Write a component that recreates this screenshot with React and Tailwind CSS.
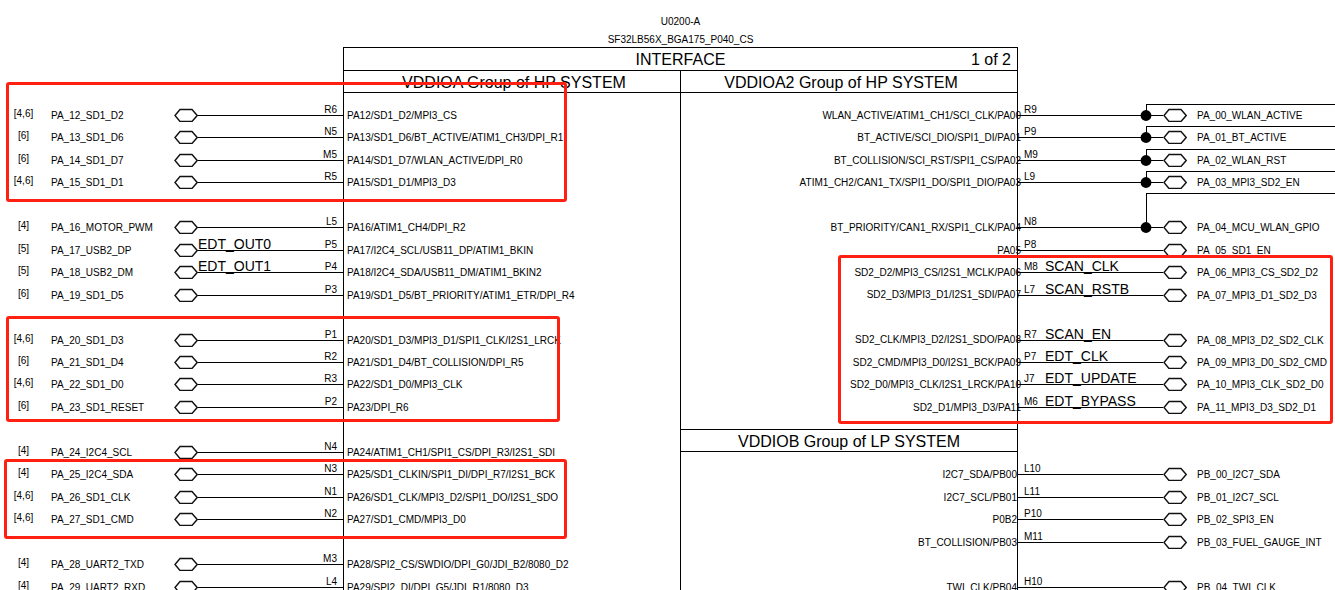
const leftPins = [
  { slot: 0, refs: '[4,6]', net: 'PA_12_SD1_D2', ball: 'R6', fn: 'PA12/SD1_D2/MPI3_CS' },
  { slot: 1, refs: '[6]', net: 'PA_13_SD1_D6', ball: 'N5', fn: 'PA13/SD1_D6/BT_ACTIVE/ATIM1_CH3/DPI_R1' },
  { slot: 2, refs: '[6]', net: 'PA_14_SD1_D7', ball: 'M5', fn: 'PA14/SD1_D7/WLAN_ACTIVE/DPI_R0' },
  { slot: 3, refs: '[4,6]', net: 'PA_15_SD1_D1', ball: 'R5', fn: 'PA15/SD1_D1/MPI3_D3' },
  { slot: 5, refs: '[4]', net: 'PA_16_MOTOR_PWM', ball: 'L5', fn: 'PA16/ATIM1_CH4/DPI_R2' },
  { slot: 6, refs: '[5]', net: 'PA_17_USB2_DP', ball: 'P5', fn: 'PA17/I2C4_SCL/USB11_DP/ATIM1_BKIN', note: 'EDT_OUT0' },
  { slot: 7, refs: '[5]', net: 'PA_18_USB2_DM', ball: 'P4', fn: 'PA18/I2C4_SDA/USB11_DM/ATIM1_BKIN2', note: 'EDT_OUT1' },
  { slot: 8, refs: '[6]', net: 'PA_19_SD1_D5', ball: 'P3', fn: 'PA19/SD1_D5/BT_PRIORITY/ATIM1_ETR/DPI_R4' },
  { slot: 10, refs: '[4,6]', net: 'PA_20_SD1_D3', ball: 'P1', fn: 'PA20/SD1_D3/MPI3_D1/SPI1_CLK/I2S1_LRCK' },
  { slot: 11, refs: '[6]', net: 'PA_21_SD1_D4', ball: 'R2', fn: 'PA21/SD1_D4/BT_COLLISION/DPI_R5' },
  { slot: 12, refs: '[4,6]', net: 'PA_22_SD1_D0', ball: 'R3', fn: 'PA22/SD1_D0/MPI3_CLK' },
  { slot: 13, refs: '[6]', net: 'PA_23_SD1_RESET', ball: 'P2', fn: 'PA23/DPI_R6' },
  { slot: 15, refs: '[4]', net: 'PA_24_I2C4_SCL', ball: 'N4', fn: 'PA24/ATIM1_CH1/SPI1_CS/DPI_R3/I2S1_SDI' },
  { slot: 16, refs: '[4]', net: 'PA_25_I2C4_SDA', ball: 'N3', fn: 'PA25/SD1_CLKIN/SPI1_DI/DPI_R7/I2S1_BCK' },
  { slot: 17, refs: '[4,6]', net: 'PA_26_SD1_CLK', ball: 'N1', fn: 'PA26/SD1_CLK/MPI3_D2/SPI1_DO/I2S1_SDO' },
  { slot: 18, refs: '[4,6]', net: 'PA_27_SD1_CMD', ball: 'N2', fn: 'PA27/SD1_CMD/MPI3_D0' },
  { slot: 20, refs: '[4]', net: 'PA_28_UART2_TXD', ball: 'M3', fn: 'PA28/SPI2_CS/SWDIO/DPI_G0/JDI_B2/8080_D2' },
  { slot: 21, refs: '[4]', net: 'PA_29_UART2_RXD', ball: 'L4', fn: 'PA29/SPI2_DI/DPI_G5/JDI_R1/8080_D3' },
];

const rightPins = [
  { slot: 0, net: 'PA_00_WLAN_ACTIVE', ball: 'R9', fn: 'WLAN_ACTIVE/ATIM1_CH1/SCI_CLK/PA00', branch: 'short' },
  { slot: 1, net: 'PA_01_BT_ACTIVE', ball: 'P9', fn: 'BT_ACTIVE/SCI_DIO/SPI1_DI/PA01', branch: 'short' },
  { slot: 2, net: 'PA_02_WLAN_RST', ball: 'M9', fn: 'BT_COLLISION/SCI_RST/SPI1_CS/PA02', branch: 'short' },
  { slot: 3, net: 'PA_03_MPI3_SD2_EN', ball: 'L9', fn: 'ATIM1_CH2/CAN1_TX/SPI1_DO/SPI1_DIO/PA03', branch: 'short' },
  { slot: 5, net: 'PA_04_MCU_WLAN_GPIO', ball: 'N8', fn: 'BT_PRIORITY/CAN1_RX/SPI1_CLK/PA04', branch: 'tall' },
  { slot: 6, net: 'PA_05_SD1_EN', ball: 'P8', fn: 'PA05' },
  { slot: 7, net: 'PA_06_MPI3_CS_SD2_D2', ball: 'M8', fn: 'SD2_D2/MPI3_CS/I2S1_MCLK/PA06', note: 'SCAN_CLK' },
  { slot: 8, net: 'PA_07_MPI3_D1_SD2_D3', ball: 'L7', fn: 'SD2_D3/MPI3_D1/I2S1_SDI/PA07', note: 'SCAN_RSTB' },
  { slot: 10, net: 'PA_08_MPI3_D2_SD2_CLK', ball: 'R7', fn: 'SD2_CLK/MPI3_D2/I2S1_SDO/PA08', note: 'SCAN_EN' },
  { slot: 11, net: 'PA_09_MPI3_D0_SD2_CMD', ball: 'P7', fn: 'SD2_CMD/MPI3_D0/I2S1_BCK/PA09', note: 'EDT_CLK' },
  { slot: 12, net: 'PA_10_MPI3_CLK_SD2_D0', ball: 'J7', fn: 'SD2_D0/MPI3_CLK/I2S1_LRCK/PA10', note: 'EDT_UPDATE' },
  { slot: 13, net: 'PA_11_MPI3_D3_SD2_D1', ball: 'M6', fn: 'SD2_D1/MPI3_D3/PA11', note: 'EDT_BYPASS' },
  { slot: 16, net: 'PB_00_I2C7_SDA', ball: 'L10', fn: 'I2C7_SDA/PB00' },
  { slot: 17, net: 'PB_01_I2C7_SCL', ball: 'L11', fn: 'I2C7_SCL/PB01' },
  { slot: 18, net: 'PB_02_SPI3_EN', ball: 'P10', fn: 'P0B2' },
  { slot: 19, net: 'PB_03_FUEL_GAUGE_INT', ball: 'M11', fn: 'BT_COLLISION/PB03' },
  { slot: 21, net: 'PB_04_TWI_CLK', ball: 'H10', fn: 'TWI_CLK/PB04' },
];

// Spreads the pins over their slots; unused slots stay as empty rows.
function inSlots(pins, first, count) {
  return Array.from({ length: count }, (_, i) => pins.find((p) => p.slot === first + i) ?? null);
}

function Port() {
  return (
    <svg viewBox="0 0 24 14" className="h-[14px] w-6 shrink-0" aria-hidden="true">
      <path d="M1 7.5 L6 1.5 H18 L23.2 7.5 L18 13.5 H6 Z" fill="#fff" stroke="#111" strokeWidth="1.4" />
    </svg>
  );
}

function Branch({ kind }) {
  return (
    <>
      <span
        className={
          kind === 'tall'
            ? 'absolute right-0 -top-[23px] h-[34px] w-[189px] border-t border-l border-black'
            : 'absolute right-0 top-0 h-[12px] w-[189px] border-t border-l border-black'
        }
      />
      <svg viewBox="0 0 12 12" className="absolute right-[183px] top-[5px] size-3" aria-hidden="true">
        <circle cx="6" cy="6.5" r="5.4" />
      </svg>
    </>
  );
}

function LeftNets() {
  return (
    <ul className="mt-[57px] grid h-[494px] grid-rows-[repeat(22,minmax(0,1fr))]">
      {inSlots(leftPins, 0, 22).map((pin, i) => (
        <li key={i} className="flex">
          {pin && (
            <>
              <span className="w-[47px] text-center leading-[20px]">{pin.refs}</span>
              <span className="ml-1 w-[123px] leading-[23px]">{pin.net}</span>
              <span className="mt-1">
                <Port />
              </span>
              <span className="flex h-[12px] flex-1 items-end justify-between border-b border-black pr-1.5 leading-[11px]">
                <span className="text-[14px] leading-[11px]">{pin.note}</span>
                {pin.ball}
              </span>
            </>
          )}
        </li>
      ))}
    </ul>
  );
}

function RightNets() {
  return (
    <ul className="mt-[57px] grid h-[494px] grid-rows-[repeat(22,minmax(0,1fr))]">
      {inSlots(rightPins, 0, 22).map((pin, i) => (
        <li key={i} className="relative flex">
          {pin && (
            <>
              <span className="flex h-[12px] flex-1 items-end border-b border-black pl-1.5 leading-[11px]">
                <span className="w-[21px]">{pin.ball}</span>
                <span className="text-[14px] leading-[11px]">{pin.note}</span>
              </span>
              <span className="mt-1">
                <Port />
              </span>
              <span className="w-[148px] pl-2.5 leading-[23px]">{pin.net}</span>
              {pin.branch && <Branch kind={pin.branch} />}
            </>
          )}
        </li>
      ))}
    </ul>
  );
}

function GroupTitle({ children }) {
  return <h3 className="h-[22px] border-t border-black text-center text-[16px] leading-[24px]">{children}</h3>;
}

function PinNames({ pins, className }) {
  return (
    <ul className={className}>
      {pins.map((pin, i) => (
        <li key={i} className="leading-[23px]">
          {pin?.fn}
        </li>
      ))}
    </ul>
  );
}

function Chip() {
  return (
    <section className="border-x border-t border-black">
      <div className="grid h-[22px] grid-cols-[1fr_auto_1fr] text-[16px] leading-[23px]">
        <h2 className="col-start-2">INTERFACE</h2>
        <span className="pr-1.5 text-right">1 of 2</span>
      </div>
      <div className="grid grid-cols-[336fr_337fr]">
        <div className="h-full">
          <GroupTitle>
            <span className="pl-1">VDDIOA Group of HP SYSTEM</span>
          </GroupTitle>
          <div className="border-t border-black pt-[11px] pl-[3px]">
            <PinNames pins={inSlots(leftPins, 0, 22)} className="grid h-[494px] grid-rows-[repeat(22,minmax(0,1fr))]" />
          </div>
        </div>
        <div className="border-l border-black">
          <GroupTitle>
            <span className="pr-4">VDDIOA2 Group of HP SYSTEM</span>
          </GroupTitle>
          <div className="border-t border-black pt-[11px] pb-[11px]">
            <PinNames
              pins={inSlots(rightPins, 0, 14)}
              className="-mr-1 grid h-[314px] grid-rows-[repeat(14,minmax(0,1fr))] text-right"
            />
          </div>
          <GroupTitle>VDDIOB Group of LP SYSTEM</GroupTitle>
          <div className="border-t border-black pt-[11px]">
            <PinNames
              pins={inSlots(rightPins, 16, 6)}
              className="grid h-[135px] grid-rows-[repeat(6,minmax(0,1fr))] text-right"
            />
          </div>
        </div>
      </div>
    </section>
  );
}

export default function App() {
  return (
    <main className="relative h-screen overflow-hidden bg-white font-['Liberation_Sans',Arial,sans-serif] text-[10px] whitespace-nowrap text-black">
      <header className="grid h-[47px] grid-cols-[343fr_675fr_317fr] pt-[13px] text-center leading-[18px]">
        <div className="col-start-2">
          <h1>U0200-A</h1>
          <p>SF32LB56X_BGA175_P040_CS</p>
        </div>
      </header>
      <div className="grid grid-cols-[343fr_675fr_317fr]">
        <LeftNets />
        <Chip />
        <RightNets />
      </div>
      <div className="absolute top-[82px] left-1.5 h-[120px] w-[42%] rounded-[3px] border-3 border-[#ff2011]" />
      <div className="absolute top-[316px] left-1.5 h-[106px] w-[41.5%] rounded-[3px] border-3 border-[#ff2011]" />
      <div className="absolute top-[459px] left-1 h-[80px] w-[42.2%] rounded-[3px] border-3 border-[#ff2011]" />
      <div className="absolute top-[255px] right-0.5 h-[169px] w-[37.1%] rounded-[3px] border-3 border-[#ff2011]" />
    </main>
  );
}
